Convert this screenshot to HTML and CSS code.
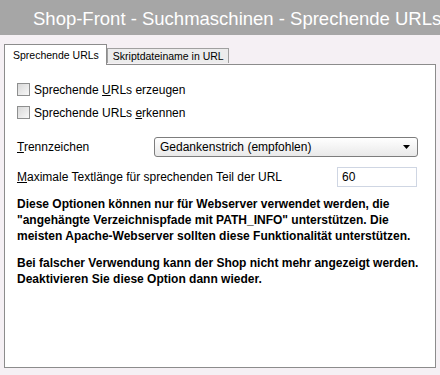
FILE: index.html
```html
<!DOCTYPE html>
<html lang="de">
<head>
  <meta charset="UTF-8">
  <title>Shop-Front - Suchmaschinen - Sprechende URLs</title>
  <link rel="stylesheet" href="styles.css">
</head>
<body>

  <div class="header">Shop-Front - Suchmaschinen - Sprechende URLs</div>

  <div class="tabs">
    <div class="tab active">Sprechende URLs</div>
    <div class="tab">Skriptdateiname in URL</div>
  </div>

  <div class="panel">
    <label class="check-row">
      <input type="checkbox">
      <span>Sprechende <u>U</u>RLs erzeugen</span>
    </label>
    <label class="check-row">
      <input type="checkbox">
      <span>Sprechende URLs <u>e</u>rkennen</span>
    </label>

    <div class="field-row first">
      <span class="label"><u>T</u>rennzeichen</span>
      <div class="select">
        <span>Gedankenstrich (empfohlen)</span>
        <svg width="7" height="4" viewBox="0 0 7 4"><path d="M0 0h7L3.5 4z" fill="#000"/></svg>
      </div>
    </div>

    <div class="field-row">
      <span class="label"><u>M</u>aximale Textlänge für sprechenden Teil der URL</span>
      <input class="text-input" type="text" value="60">
    </div>

    <p class="note">Diese Optionen können nur für Webserver verwendet werden, die "angehängte Verzeichnispfade mit PATH_INFO" unterstützen. Die meisten Apache-Webserver sollten diese Funktionalität unterstützen.</p>
    <p class="note">Bei falscher Verwendung kann der Shop nicht mehr angezeigt werden. Deaktivieren Sie diese Option dann wieder.</p>
  </div>

</body>
</html>
```

FILE: styles.css
```css
body {
  margin: 0;
  background: #f5f0f4;
  font-family: "Liberation Sans", Arial, sans-serif;
  font-size: 12px;
  color: #000;
}
.header {
  height: 35px;
  line-height: 37px;
  background: #a6a6a6;
  color: #fff;
  font-size: 18.5px;
  white-space: nowrap;
  padding-left: 33px;
}
.tabs {
  display: flex;
  align-items: flex-end;
  margin: 8px 0 0 4px;
  height: 21px;
  position: relative;
  z-index: 1;
  font-size: 10.5px;
}
.tab {
  height: 14px;
  line-height: 14px;
  padding: 0 4px 0 5px;
  background: #ececec;
  border: 1px solid #a0a0a0;
  border-bottom: none;
  margin-bottom: 1px;
}
.tab.active {
  height: 20px;
  line-height: 20px;
  padding: 0 7px 0 8px;
  background: #fff;
  border-color: #8c8c8c;
  margin-bottom: -1px;
}
.panel {
  margin: 0 4px;
  height: 302px;
  background: #fff;
  border: 1px solid #8c8c8c;
  padding: 0 12px;
}
.check-row {
  display: flex;
  align-items: center;
  height: 23px;
}
.check-row:first-child {
  margin-top: 13px;
}
.check-row input {
  appearance: none;
  width: 13px;
  height: 13px;
  margin: 0 4px 0 0;
  border: 1px solid #8e8f8f;
  background: linear-gradient(135deg, #d8d8d8, #f8f8f8);
}
.field-row {
  display: flex;
  align-items: center;
  justify-content: space-between;
  height: 30px;
}
.field-row.first {
  margin-top: 8px;
}
.select {
  width: 250px;
  height: 18px;
  margin-right: 5px;
  display: flex;
  align-items: center;
  justify-content: space-between;
  padding: 0 7px 0 5px;
  border: 1px solid #7d7d7d;
  border-radius: 3px;
  background: linear-gradient(#ffffff, #e9e9e9);
}
.text-input {
  width: 70px;
  height: 18px;
  margin: 0 6px 0 0;
  padding: 0 4px;
  border: 1px solid #cfd6e3;
  font: inherit;
}
.note {
  font-weight: bold;
  line-height: 16px;
  margin: 4px 0 11px;
}
```
